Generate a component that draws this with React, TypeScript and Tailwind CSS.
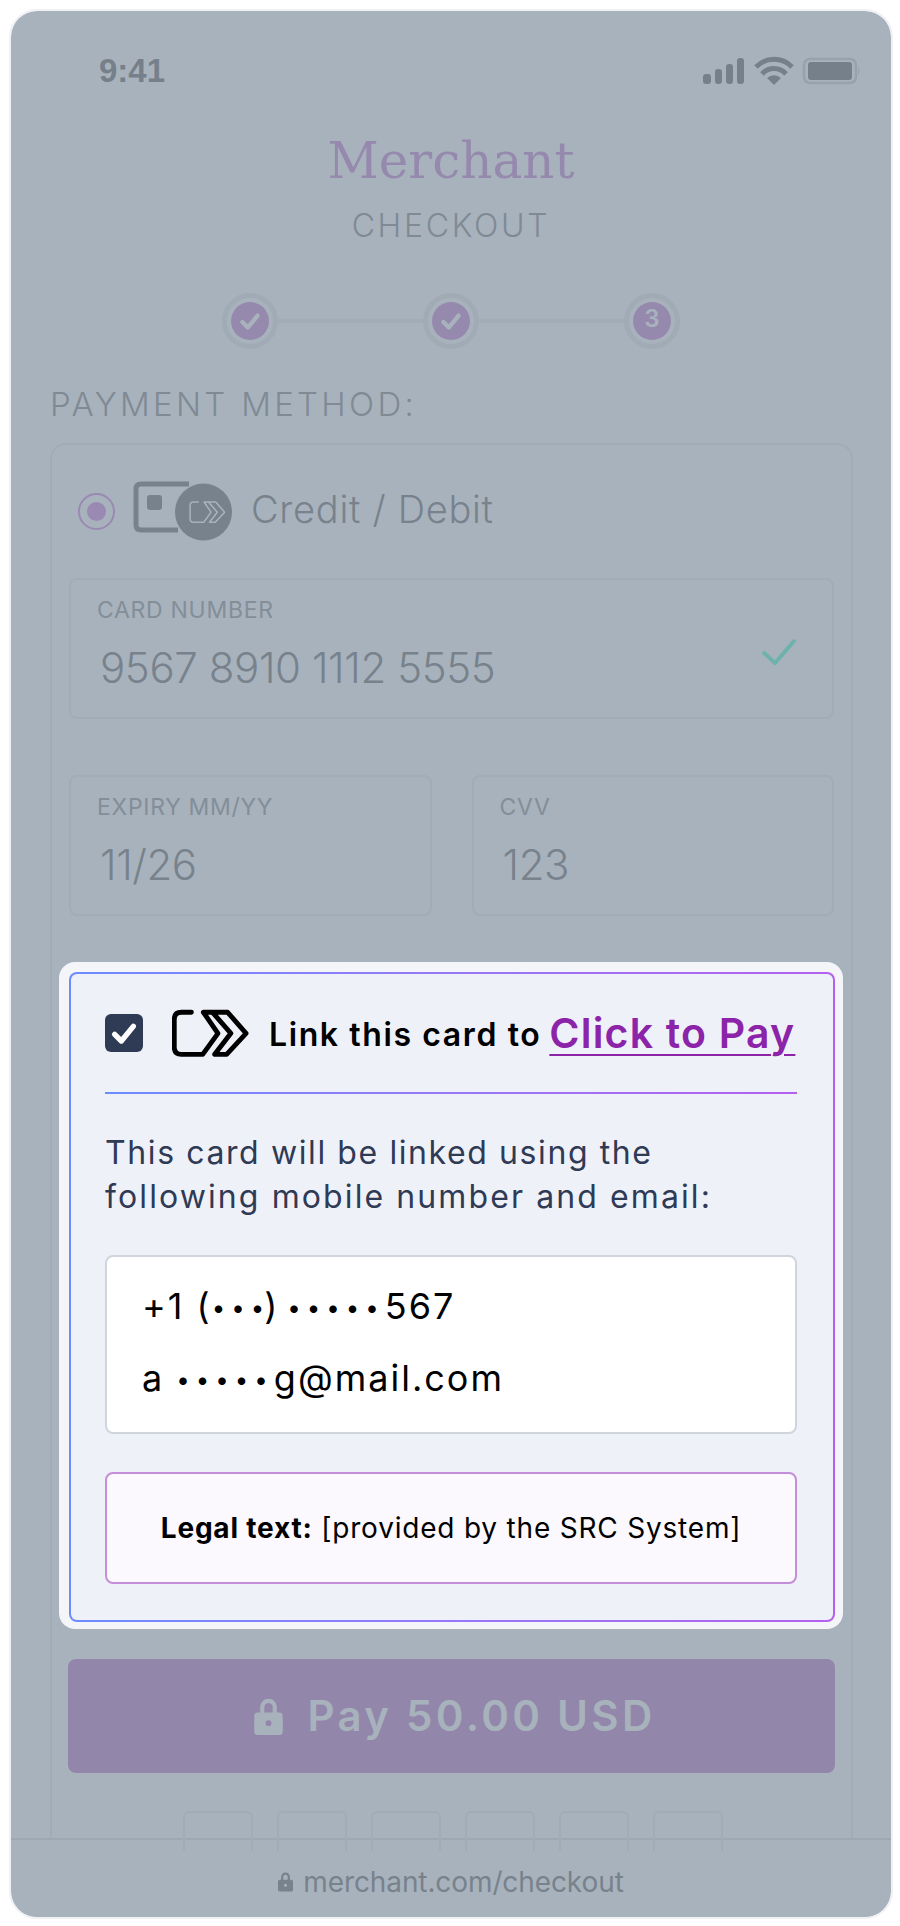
import React from "react";

const sans = "font-['Inter','Open_Sans',sans-serif]";

const Check = ({ className }: { className: string }) => (
  <svg viewBox="0 0 24 24" className={className} fill="none" stroke="currentColor" strokeWidth="4" strokeLinecap="round" strokeLinejoin="round">
    <path d="M5 13l5 5L19 7" />
  </svg>
);

const Lock = ({ className }: { className: string }) => (
  <svg viewBox="0 0 24 32" className={className} fill="currentColor">
    <path fillRule="evenodd" d="M5 13V8.500a7 7 0 0 1 14 0V13h2a3 3 0 0 1 3 3v13a3 3 0 0 1-3 3H3a3 3 0 0 1-3-3V16a3 3 0 0 1 3-3h2zm3.500 0h7V8.500a3.500 3.500 0 0 0-7 0V13zM12 19.500a2.500 2.500 0 1 0 0 5 2.500 2.500 0 0 0 0-5z" />
  </svg>
);

const ClickToPayMark = ({ className, width = 15 }: { className: string; width?: number }) => (
  <svg viewBox="243 52 238 148" className={className} fill="none" stroke="currentColor" strokeWidth={width} strokeLinejoin="round" strokeLinecap="round">
    <path d="M303 62H272Q250 62 250 85V170Q250 192 272 192H338L385 127L340 62H368L425 127L375 192H412L472 127L415 62H368" />
  </svg>
);

const Step = ({ children }: { children: React.ReactNode }) => (
  <div className="flex h-14 w-14 items-center justify-center rounded-full border-[5px] border-[#a0abb6] text-[#a8b2bc]">
    <div className="flex h-[38px] w-[38px] shrink-0 items-center justify-center rounded-full bg-[#9689ae]">{children}</div>
  </div>
);

const Field = ({ label, value, className }: { label: string; value: string; className: string }) => (
  <div className={`h-[141px] rounded-lg border-2 border-[#a1acb6] pl-[26px] pt-[18px] ${className}`}>
    <div className="text-[23px] leading-[24px] tracking-[0.7px] text-[#838e98]">{label}</div>
    <div className="mt-[21px] pl-[3px] text-[42px] font-light leading-[50px] tracking-[-0.4px] text-[#78828c]">{value}</div>
  </div>
);

// masked digits; the last dot can drop its tracking so a bracket can sit close
const Dots = ({ n, tight, className = "" }: { n: number; tight?: boolean; className?: string }) => (
  <span className={`align-[3px] text-[24px] leading-none tracking-[6px] ${className}`}>
    {"•".repeat(tight ? n - 1 : n)}
    {tight && <span className="tracking-normal">•</span>}
  </span>
);

export default function App() {
  return (
    <div className={`min-h-[1926px] bg-white pb-[9px] pl-[11px] pr-[9px] pt-[11px] ${sans}`}>
      <div className="relative flex h-[1906px] flex-col overflow-hidden rounded-[26px] bg-[#a8b2bc] outline outline-2 outline-[#f0f1f3]">
        {/* status bar */}
        <div className="flex h-[78px] items-end justify-between pl-[88px] pr-[30px]">
          <span className="font-['Liberation_Sans',sans-serif] text-[33px] font-bold leading-[36px] text-[#76808a]">9:41</span>
          <svg viewBox="0 0 160 30" className="mb-[3px] h-[30px] w-[160px] text-[#76808a]" fill="currentColor">
            <rect x="2" y="18" width="8" height="10" rx="3" />
            <rect x="14" y="13" width="7" height="15" rx="3" />
            <rect x="25" y="8" width="7" height="20" rx="3" />
            <rect x="36" y="2" width="7" height="26" rx="3" />
            <path d="M55 11a25 25 0 0 1 36 0" fill="none" stroke="currentColor" strokeWidth="5" />
            <path d="M61 18a16 16 0 0 1 24 0" fill="none" stroke="currentColor" strokeWidth="5" />
            <path d="M66 22a10 10 0 0 1 14 0l-7 7z" />
            <rect x="103" y="3" width="52" height="24" rx="6" fill="none" stroke="#97a2ad" strokeWidth="2.500" />
            <rect x="107" y="6" width="44" height="18" rx="3" />
            <path d="M157 11q3 4 0 8z" fill="#97a2ad" />
          </svg>
        </div>

        {/* merchant heading */}
        <div className="mt-[42px] text-center font-['DejaVu_Serif',serif] text-[50px] font-normal leading-[60px] text-[#9689ae]">Merchant</div>
        <div className="mt-[15px] text-center text-[32px] font-light leading-[40px] tracking-[2.7px] text-[#808a95]">CHECKOUT</div>

        {/* stepper */}
        <div className="mt-[47px] flex items-center justify-center">
          <Step><Check className="h-[26px] w-[26px]" /></Step>
          <div className="h-1 w-[145px] bg-[#a1acb6]" />
          <Step><Check className="h-[26px] w-[26px]" /></Step>
          <div className="h-1 w-[145px] bg-[#a1acb6]" />
          <Step><span className="-mt-1 text-[24px] font-semibold leading-none">3</span></Step>
        </div>

        <div className="ml-[39px] mt-[35px] text-[33px] font-light leading-[40px] tracking-[3.3px] text-[#7f8a94]">PAYMENT METHOD:</div>

        {/* payment card, runs under the footer */}
        <div className="ml-[39px] mr-[38px] mt-[19px] flex min-h-0 flex-1 flex-col overflow-hidden rounded-t-2xl border-x-2 border-t-2 border-[#a1acb6] px-[17px] pt-[35px]">
          <div className="flex h-[62px] items-center">
            <div className="ml-[9px] flex h-[37px] w-[37px] items-center justify-center rounded-full border-2 border-[#9a89b2]">
              <div className="h-[19px] w-[19px] rounded-full bg-[#9a89b2]" />
            </div>
            <div className="relative ml-[18px] h-[62px] w-[99px] text-[#78828c]">
              <svg viewBox="0 0 99 62" className="h-[62px] w-[99px]" fill="none">
                <path d="M56 4H8Q3 4 3 9V45Q3 50 8 50H45" stroke="currentColor" strokeWidth="5" />
                <rect x="14" y="15" width="15" height="15" rx="3" fill="currentColor" />
                <circle cx="70.500" cy="32" r="28.500" fill="currentColor" />
              </svg>
              <ClickToPayMark className="absolute left-[56px] top-[20px] h-[24px] w-[37px] text-[#a8b2bc]" width={10} />
            </div>
            <span className="-mt-1 ml-[19px] text-[38px] font-light leading-[44px] tracking-[0.7px] text-[#78828c]">Credit / Debit</span>
          </div>

          <div className="relative mt-[36px]">
            <Field label="CARD NUMBER" value="9567 8910 1112 5555" className="" />
            <svg viewBox="0 0 36 26" className="absolute right-[37px] top-[61px] h-[26px] w-[36px] text-[#6eb2ad]" fill="none" stroke="currentColor" strokeWidth="4">
              <path d="M2 13l12 11L34 1" />
            </svg>
          </div>

          <div className="mt-[56px] flex gap-[40px]">
            <Field label="EXPIRY MM/YY" value="11/26" className="flex-1" />
            <Field label="CVV" value="123" className="flex-1" />
          </div>
        </div>

        {/* pay button, lies on the card */}
        <div className="absolute left-[57px] top-[1648px] flex h-[114px] w-[767px] items-center justify-center gap-[23px] rounded-lg bg-[#9287aa] pl-[6px] text-[#a8b2bc]">
          <Lock className="h-[38px] w-[31px]" />
          <span className="text-[42px] font-semibold leading-[48px] tracking-[3.3px]">Pay 50.00 USD</span>
        </div>

        {/* card brand placeholders */}
        <div className="absolute left-[172px] top-[1800px] flex gap-[24px]">
          {[0, 1, 2, 3, 4, 5].map((i) => (
            <div key={i} className="h-[40px] w-[70px] rounded-t-md border-x-2 border-t-2 border-[#a1acb6]" />
          ))}
        </div>

        {/* address bar */}
        <div className="flex h-[79px] shrink-0 items-center justify-center gap-[10px] border-t-2 border-[#9ea8b2] bg-[#a8b2bc] pt-[6px] text-[#78828c]">
          <Lock className="h-[21px] w-[15px]" />
          <span className="text-[28px] leading-[34px] tracking-[-0.1px]">merchant.com/checkout</span>
        </div>

        {/* consent popup */}
        <div className="absolute left-[48px] top-[951px] h-[667px] w-[784px] rounded-[16px] bg-[#f3f5f8] p-[10px]">
          <div className="h-[650px] w-[766px] rounded-[8px] bg-gradient-to-r from-[#6b8cff] to-[#b45ff0] p-[2px]">
            <div className="h-full rounded-[6px] bg-[#eff1f9] pl-[34px] pr-[36px]">
              <div className="flex h-[118px] items-center">
                <div className="flex h-[38px] w-[38px] items-center justify-center rounded-md bg-[#2f3a55] text-white">
                  <Check className="h-[32px] w-[32px]" />
                </div>
                <ClickToPayMark className="ml-[29px] h-[48px] w-[77px] text-black" />
                <span className="ml-[20px] mt-[3px] whitespace-nowrap text-[32px] font-semibold leading-[36px] tracking-[1.6px] text-black">Link this card to</span>
                <a className="ml-[8px] whitespace-nowrap text-[41px] font-semibold leading-[46px] tracking-[1.2px] text-[#8b24a8] underline decoration-2 underline-offset-[6px]">Click to Pay</a>
              </div>
              <div className="h-[2px] bg-gradient-to-r from-[#6b8cff] to-[#b45ff0]" />
              <p className="mt-[37px] whitespace-nowrap text-[32px] leading-[44px] tracking-[1.6px] text-[#2f3a55]">
                This card will be linked using the
                <br />
                <span className="tracking-[2.1px]">following mobile number and email:</span>
              </p>
              <div className="mt-[36px] h-[179px] rounded-lg border-2 border-[#d0d5dc] bg-white pl-[35px] pt-[27px] text-[36px] tracking-[2px] text-black">
                <div className="whitespace-nowrap leading-[44px]">+1 (<Dots n={3} tight />)<Dots n={5} className="ml-[8px]" />567</div>
                <div className="mt-[28px] whitespace-nowrap leading-[44px]">a <Dots n={5} />g@mail.com</div>
              </div>
              <div className="mt-[38px] flex h-[112px] items-center justify-center whitespace-nowrap rounded-lg border-2 border-[#c58ed8] bg-[#fbf8fe] text-[28px] leading-[32px] tracking-[0.8px] text-black">
                <span className="font-bold">Legal text:</span>&nbsp;[provided by the SRC System]
              </div>
            </div>
          </div>
        </div>
      </div>
    </div>
  );
}
